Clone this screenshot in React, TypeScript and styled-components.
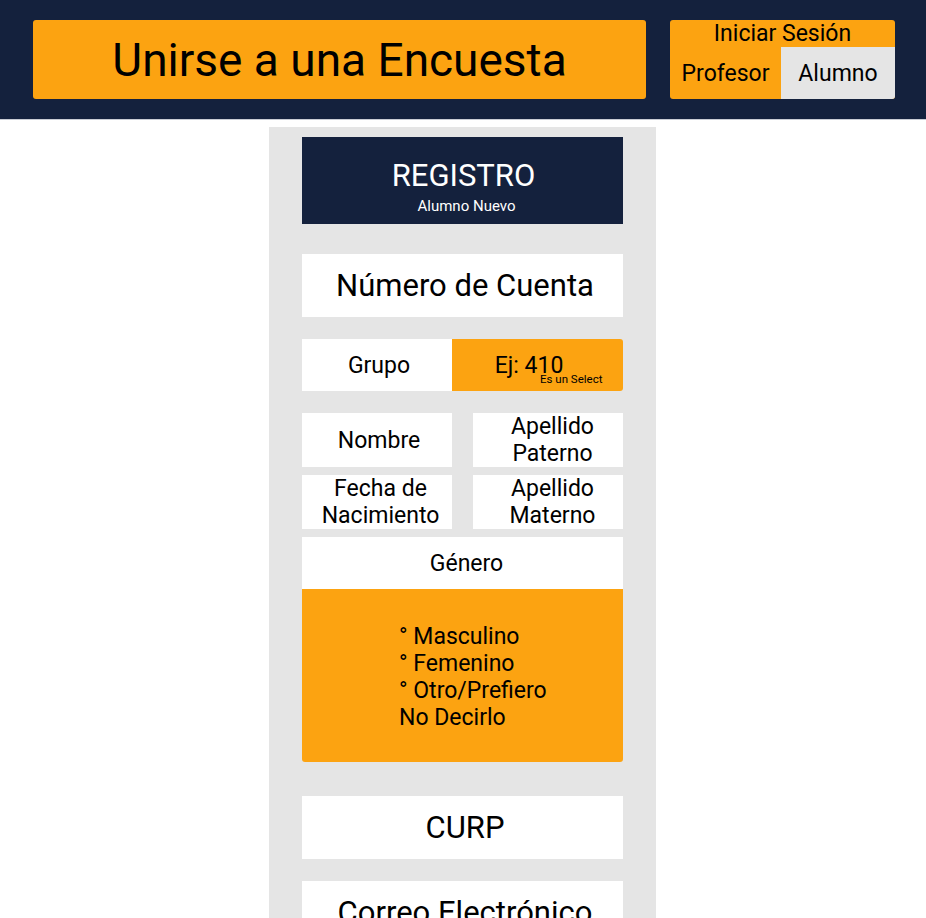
import React from "react";
import styled, { createGlobalStyle } from "styled-components";

const NAVY = "#14213D";
const ORANGE = "#FCA311";
const GRAY = "#E5E5E5";

const Global = createGlobalStyle`
  html, body { margin: 0; padding: 0; background: #fff; }
  body { font-family: Roboto, "Noto Sans", sans-serif; color: #000; }
  * { box-sizing: border-box; }
`;

const Header = styled.header`
  background: ${NAVY};
  height: 120px;
  border-bottom: 1px solid #c9ccd4;
  display: flex;
  align-items: flex-start;
  gap: 24px;
  padding: 20px 31px 0 33px;
`;

const JoinButton = styled.div`
  flex: 1;
  height: 79px;
  background: ${ORANGE};
  border-radius: 3px;
  display: flex;
  align-items: center;
  justify-content: center;
  font-size: 46px;
`;

const Login = styled.div`
  width: 225px;
  height: 79px;
  background: ${ORANGE};
  border-radius: 3px;
  overflow: hidden;
  display: grid;
  grid-template-rows: 27px 1fr;
  grid-template-columns: 111px 1fr;
  font-size: 23px;
`;

const LoginTitle = styled.div`
  grid-column: 1 / 3;
  display: flex;
  align-items: center;
  justify-content: center;
`;

const LoginOption = styled.div<{ $active?: boolean }>`
  display: flex;
  align-items: center;
  justify-content: center;
  background: ${(p) => (p.$active ? GRAY : "transparent")};
`;

const Content = styled.div`
  display: flex;
  justify-content: center;
  padding: 7px 1px 0 0;
`;

const Panel = styled.main`
  width: 387px;
  background: ${GRAY};
  padding: 10px 33px 40px;
  display: flex;
  flex-direction: column;
`;

const Banner = styled.div`
  background: ${NAVY};
  color: #fff;
  height: 87px;
  display: flex;
  flex-direction: column;
  align-items: center;
  justify-content: center;
  padding: 10px 0 0 2px;
`;

const BannerTitle = styled.div`
  font-size: 31px;
  line-height: 40px;
`;

const BannerSub = styled.div`
  font-size: 15px;
  line-height: 20px;
  padding-left: 6px;
`;

const Field = styled.div<{ $mt: number; $h?: number; $size?: number }>`
  margin-top: ${(p) => p.$mt}px;
  height: ${(p) => p.$h ?? 63}px;
  background: #fff;
  display: flex;
  align-items: center;
  justify-content: center;
  text-align: center;
  padding-left: ${(p) => ((p.$size ?? 31) < 30 ? 8 : 5)}px;
  font-size: ${(p) => p.$size ?? 31}px;
`;

const SplitRow = styled.div<{ $mt: number }>`
  margin-top: ${(p) => p.$mt}px;
  height: 52px;
  display: grid;
  grid-template-columns: 150px 1fr;
  font-size: 23px;
`;

const GroupLabel = styled.div`
  background: #fff;
  display: flex;
  align-items: center;
  justify-content: center;
  padding-left: 4px;
`;

const GroupSelect = styled.div`
  position: relative;
  background: ${ORANGE};
  border-radius: 0 3px 3px 0;
  display: flex;
  align-items: center;
  justify-content: center;
  padding-right: 17px;
`;

const SelectNote = styled.span`
  position: absolute;
  left: 88px;
  top: 34px;
  font-size: 11.5px;
  line-height: 13px;
`;

const PairRow = styled.div<{ $mt: number }>`
  margin-top: ${(p) => p.$mt}px;
  height: 52px;
  display: grid;
  grid-template-columns: 150px 150px;
  justify-content: space-between;
`;

const Cell = styled.div<{ $shift?: number }>`
  background: #fff;
  display: flex;
  align-items: center;
  justify-content: center;
  text-align: center;
  padding-left: ${(p) => p.$shift ?? 6}px;
  font-size: 23px;
  line-height: 27px;
`;

const Options = styled.div`
  height: 173px;
  background: ${ORANGE};
  border-radius: 0 0 3px 3px;
  display: flex;
  align-items: center;
  padding: 2px 60px 0 97px;
  font-size: 23px;
  line-height: 27px;
`;

export default function App() {
  return (
    <>
      <Global />
      <Header>
        <JoinButton>Unirse a una Encuesta</JoinButton>
        <Login>
          <LoginTitle>Iniciar Sesión</LoginTitle>
          <LoginOption>Profesor</LoginOption>
          <LoginOption $active>Alumno</LoginOption>
        </Login>
      </Header>
      <Content>
        <Panel>
          <Banner>
            <BannerTitle>REGISTRO</BannerTitle>
            <BannerSub>Alumno Nuevo</BannerSub>
          </Banner>
          <Field $mt={30}>Número de Cuenta</Field>
          <SplitRow $mt={22}>
            <GroupLabel>Grupo</GroupLabel>
            <GroupSelect>
              Ej: 410
              <SelectNote>Es un Select</SelectNote>
            </GroupSelect>
          </SplitRow>
          <PairRow $mt={22}>
            <Cell $shift={4}>Nombre</Cell>
            <Cell $shift={9}>
              Apellido
              <br />
              Paterno
            </Cell>
          </PairRow>
          <PairRow $mt={10}>
            <Cell $shift={7}>
              Fecha de
              <br />
              Nacimiento
            </Cell>
            <Cell $shift={9}>
              Apellido
              <br />
              Materno
            </Cell>
          </PairRow>
          <Field $mt={10} $h={52} $size={23}>
            Género
          </Field>
          <Options>
            <div>
              ° Masculino
              <br />
              ° Femenino
              <br />
              ° Otro/Prefiero No Decirlo
            </div>
          </Options>
          <Field $mt={34}>CURP</Field>
          <Field $mt={22}>Correo Electrónico</Field>
        </Panel>
      </Content>
    </>
  );
}
